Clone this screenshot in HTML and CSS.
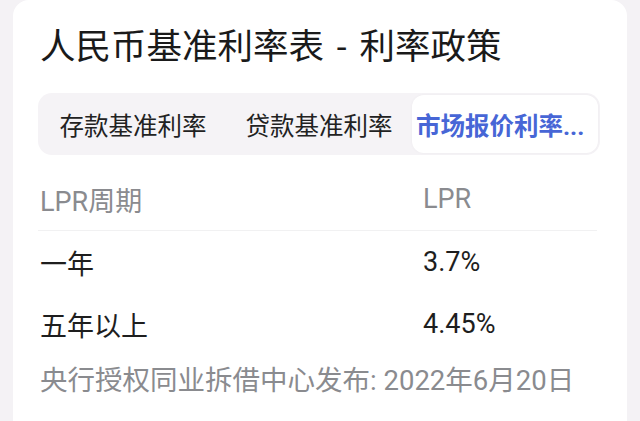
FILE: index.html
```html
<!DOCTYPE html>
<html lang="zh-CN">
<head>
<meta charset="utf-8">
<title>人民币基准利率表 - 利率政策</title>
<link rel="stylesheet" href="styles.css">
</head>
<body>
<div class="card">
  <h1 class="title">人民币基准利率表 - 利率政策</h1>
  <div class="tabs">
    <div class="tab">存款基准利率</div>
    <div class="tab">贷款基准利率</div>
    <div class="tab active">市场报价利率...</div>
  </div>
  <div class="table">
    <div class="row head">
      <div class="cell">LPR周期</div>
      <div class="cell">LPR</div>
    </div>
    <div class="row">
      <div class="cell">一年</div>
      <div class="cell">3.7%</div>
    </div>
    <div class="row">
      <div class="cell">五年以上</div>
      <div class="cell">4.45%</div>
    </div>
  </div>
  <div class="note">央行授权同业拆借中心发布: 2022年6月20日</div>
</div>
</body>
</html>
```
FILE: styles.css
```css
html, body {
  margin: 0;
  padding: 0;
  background: #f4f2f5;
  font-family: Roboto, "Noto Sans CJK SC", sans-serif;
  overflow: hidden;
}
.card {
  margin: 0 13px;
  background: #ffffff;
  border-radius: 16px 16px 0 0;
  padding: 23px 27px 40px 25px;
  min-height: 440px;
  box-sizing: border-box;
}
.title {
  margin: 0 0 22px 2px;
  font-size: 35.5px;
  line-height: 48px;
  font-weight: 400;
  color: #1a1a1a;
  white-space: nowrap;
  word-spacing: 4px;
}
.tabs {
  display: grid;
  grid-template-columns: 1fr 1fr 1fr;
  height: 62px;
  padding: 2px;
  box-sizing: border-box;
  background: #f5f3f6;
  border-radius: 14px;
}
.tab {
  display: flex;
  align-items: center;
  justify-content: center;
  font-size: 24.5px;
  color: #222222;
  white-space: nowrap;
  overflow: hidden;
}
.tab.active {
  justify-content: flex-start;
  padding-left: 4px;
  background: #ffffff;
  border-radius: 12px;
  color: #4766d6;
  font-weight: 700;
  box-shadow: 0 0 3px rgba(0, 0, 0, 0.04);
}
.table {
  margin-top: 13px;
}
.row {
  display: grid;
  grid-template-columns: 383px 1fr;
  height: 62px;
  align-items: center;
  font-size: 27px;
  color: #1e1e1e;
}
.row .cell {
  padding-left: 2px;
}
.row.head {
  color: #8a8b8f;
  border-bottom: 1px solid #f1f1f2;
  margin-right: 3px;
}
.note {
  margin-top: 8px;
  padding-left: 2px;
  line-height: 36px;
  font-size: 27.5px;
  color: #8a8b8f;
  white-space: nowrap;
}
```
